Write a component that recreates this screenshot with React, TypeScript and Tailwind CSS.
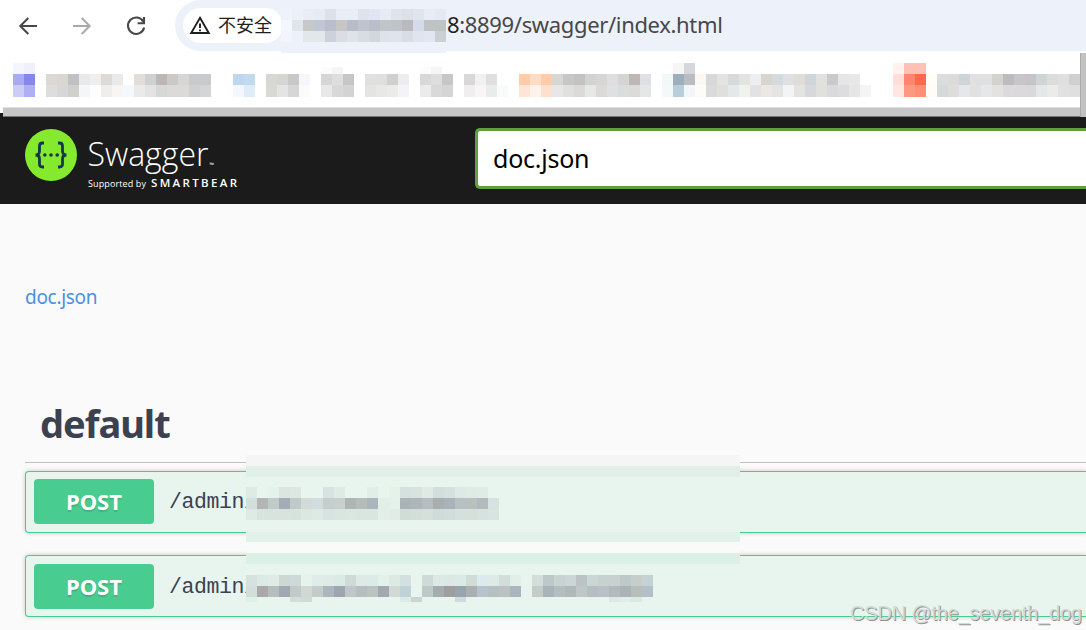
import { clsx } from "clsx";

type Row = { h: number; runs: Record<number, string> };

// Every row is a set of runs: start column -> hex colours, 11px per cell
const bookmarkRows: Row[] = [
    { h: 4, runs: { 0: "f5f5ff f0effd", 60: "f6f6f6 d6d7da", 80: "fff1ee ffc0b5 ffc0b5" } },
    { h: 7, runs: { 0: "f5f5ff f0effd", 28: "fcfcfc f5f5f5", 37: "fcfcfc f5f5f5", 60: "f6f6f6 d6d7da", 80: "fff1ee ffc0b5 ffc0b5" } },
    {
        h: 11,
        runs: {
            0: "aaaaf0 8586ea fdfdfd dad9d6 dad6d2 bfc1c2 e8eaea edeeed dcd9d7 e8eaeb",
            11: "e0dddb cfd0d2 bcb6b4 c9c9c7 d7d6d5 c9cacc c9cacc",
            20: "bfd7ee c1daee",
            23: "d8d7d4 d5d5d3 c9c8c6 f4f8fc",
            28: "d6d6d6 dedede c6c6c6",
            32: "e1e0e1 dfdfdd d0d0d0 ededf0",
            37: "d8d8d8 dedede c7c7c7",
            41: "d9d7d8 eff1f3 dfdfdf",
            46: "ffcca9 ffdcc4 ffccaa d9d7d3 c7c7c7 c4c3c1 d3d3d3 d7d6d5 dddedd d4d4d5 bdb8b6 dfe0e3",
            59: "f2f7f8 9dafba b9bdc1 fcf7f3 d8d8d8 e3e3e3 d7d9db e3e3e0 edeef1 d8d5cf d5dade e0e0e2 e2dcd9 d0d5dc e0e1e1 cacaca e6e6e7 e8e8e8",
            80: "ffded9 ff866b fe6947 fffdf8 dcdcdc dddada cfd4d7 e0e0e0 dfe0e0 d4d3cf babcbe c8c6c8 c7c3c6 cfd5d4 dcdcdb dfdfdf d0d0d0",
        },
    },
    {
        h: 12,
        runs: {
            0: "ccccf5 afaff4",
            3: "dddddb d7d7d7 d0d0ce f4f6f8",
            8: "efeeed f8f6f4 f4f9fd ebe9e9 e3e3e3 d5d8d7 dbdad8 dcdad9 cfd0d2 d3d5d7",
            20: "f4f8fe dfecf8",
            23: "d8d8d5 e4e4e5 d6d6d6 fbfbfb",
            28: "e8e8e8 d8d8d8 d3d3d3",
            32: "e5e4e2 e8e8e8 ebebe9 f4f4f8",
            37: "ebebeb d9d9d9 d5d5d5",
            41: "efefef f8f5f2 eaebeb f9fbfb",
            46: "ffe5d6 fff2ea ffe0cc e7e7e7 dfe0e0 dcdad8 e6e8e8 dbdad9 dee1e1 dadddc dbdbd9 e5e6e6",
            59: "f4f8f9 b9cedb f3f6f7 fdfcfa dadada dfdfdc e3e8eb f1f1ee e2e2e2 e9e8e4 e5e4e2 f2f4f6 e4e3e1 d7d8dc e0e0dd d8dadd dddddd e6e6e6 f4f4f4",
            80: "ffe6e1 ff9880 ff8f77 fffbf5 d4d9dc dddddb e5e7eb e1e1e1 e6e7ea e3e2e1 dbdbdd dbd9da d9d8da e6e8e8 ebebea e1e1e1 dfdfdf",
        },
    },
];

const hostRows: Row[] = [
    { h: 11, runs: { 0: "eef3fb ebf0fa eaedf5 e7ebf4 dde1ea e8edf8 e8edf7 dfe3ec dfe6f1 e7ebf4 dfe3ec dce1e8 dee5ef e7ecf6 e4e9f4" } },
    { h: 11, runs: { 0: "f4f7fe e0e4ed c6c9c9 bfc8d2 babdcb c8c6c5 b5bdc7 bfc5d0 babeca c1c5c8 c0c4c8 b8babe d5dbe9 bfc3c4 bfc3c4" } },
    { h: 11, runs: { 0: "f2f5fd edf1fa e2e7ea e3e7e9 cdd1d9 dadde5 dfe2e6 d8dce4 d3d7dd dee2ea dfe3ed dadde6 dfe5ef e1e6f0 cbced3" } },
    { h: 11, runs: {} },
];

const firstPathRows: Row[] = [
    { h: 11, runs: { 0: "deeae6", 2: "e3f3ec dbe6e3 dce7e3", 7: "d7e3e1 ddebe6", 11: "e0eeea", 13: "e4f2ea d5e1de d8e2df dfeae6 d2dedc d6e1de dce9e6 dfeae6 dfece6" } },
    { h: 11, runs: { 0: "d3dfdb b2b5b4 c0cac7 a6acb5 c0cac8 d3dad7 d1dcdd c3cecd c8cfcd aeb5b5 b4bdb9 a9b7bd e1efe8 e3f1ea aab3b7 afb6ba b6bdc0 a9aeae a8b3ba b7c1c1 b9c1bf b3babc d5e2df" } },
    { h: 11, runs: { 0: "dfeae6 d7e3df d8e3df d8e2de d6e2de dce7e2 dce9e5 d7e3e1 d8e5e1 dbe6e1 d9e5e1 d9e5e1 e1efe8 e2ece6 d0dcd8 d3dedb d5dfdc cfdbd8 d2dddb d4e0dc d5e0dc d7e2de d7e4e1" } },
];

const secondPathRows: Row[] = [
    { h: 11, runs: { 0: "d6e2de dde9e4 e0ebe5 cdd8d5 ccd9d6 e4f3ec dfece7 dfebe7 dceae6 cfdad7 ddeae6 dcebe7 e3f1eb dde9e3 d2e0e0", 16: "cddad8 dde9e4 dbe8e5 dceae6 d2dcd6 dbebed dcebe5 d2dedb e1efe9", 26: "d3dedb bcc8ca c9d4d2 cbd7d6 bbc4c3 cad6d4 c7d2cf c7d2d0 bfc8c8 c6cdcb c5d2d4" } },
    { h: 11, runs: { 0: "d2dedb a9a9a9 b4bfbd a2a8b2 bfcac9 d1d7d3 c3cccb acb6bf 9fa6ad bec8c8 b8bebd bbc3c1 a2a8b0 d2d8d3 c0d1d7", 16: "bdc9c7 a5abae 9f9e9c 99a5ac aab0b1 b5c3cd b5c0c2 bcc2c1 aab5bf", 26: "c4ccca a9b4ba b3bebf b1b8ba bfc7c7 b7bec3 b9c1c5 b3babc aab3b7 b7bebc b3bfc9" } },
    { h: 5, runs: { 0: "e0efe9", 4: "d1ddda d0dbd8", 14: "dceae6 c8d5d4", 19: "cfdcdb", 33: "dbe9e5 e0eeea dbe9e5" } },
];

function Mosaic({ rows, className }: { rows: Row[]; className?: string }) {
    return (
        <div className={className}>
            {rows.map((row, r) => (
                <div key={r} className="grid auto-cols-[11px] grid-flow-col justify-start" style={{ height: row.h }}>
                    {Object.entries(row.runs).flatMap(([start, colors]) =>
                        colors.split(" ").map((color, i) => (
                            <span
                                key={`${start}-${i}`}
                                className="row-start-1"
                                style={{ gridColumnStart: Number(start) + i + 1, backgroundColor: `#${color}` }}
                            />
                        ))
                    )}
                </div>
            ))}
        </div>
    );
}

function Toolbar() {
    return (
        <div className="flex h-[51px] items-center bg-white">
            <svg className="ml-4 h-6 w-6 shrink-0" viewBox="0 0 24 24" fill="none" stroke="#474747" strokeWidth="2">
                <path d="M21 12H4.5M12.3 4 4.3 12l8 8" />
            </svg>
            <svg className="ml-[30px] h-6 w-6 shrink-0" viewBox="0 0 24 24" fill="none" stroke="#a9a9a9" strokeWidth="2">
                <path d="M3 12h16.5M11.7 4l8 8-8 8" />
            </svg>
            <svg className="ml-[30px] h-6 w-6 shrink-0" viewBox="0 0 24 24" fill="none" stroke="#474747" strokeWidth="2.1">
                <path d="M19.3 7.6A8.2 8.2 0 1 0 20.2 13.5M20 3v6.2h-6.4" />
            </svg>
            <div className="relative ml-[27px] flex h-[51px] flex-1 items-center rounded-l-full bg-[#edf1fa]">
                <div className="ml-2 flex h-[35px] w-[100px] items-center rounded-full bg-white pl-[6px]">
                    <svg className="h-[22px] w-[22px]" viewBox="0 0 22 22" fill="none" stroke="#1f1f1f" strokeWidth="1.9">
                        <path d="M11 2.8 19.8 18H2.2z" />
                        <path d="M11 8.5v4.5M11 14.4v1.8" />
                    </svg>
                    <span className="ml-[7px] pb-[3px] font-['Noto_Sans_CJK_SC',sans-serif] text-[18px] leading-none whitespace-nowrap text-[#1f1f1f]">不安全</span>
                </div>
                <Mosaic rows={hostRows} className="absolute top-[9px] left-[106px] w-[165px] bg-[#edf1fa]" />
                <span className="ml-[164px] pb-[3px] font-['Noto_Sans',sans-serif] text-[22px] leading-none tracking-[-0.34px] whitespace-nowrap text-[#474747]">
                    <span className="text-[#1f1f1f]">8</span>:8899/swagger/index.html
                </span>
            </div>
        </div>
    );
}

function SwaggerLogo() {
    return (
        <svg className="ml-6 h-[64px] w-[216px] shrink-0" viewBox="24 128 216 64">
            <circle cx="51" cy="155" r="26" fill="#85ea2d" />
            <g fill="none" stroke="#173647" strokeWidth="2.8">
                <path d="M44 143h-1.5q-3 0-3 3v5q0 4-4 4 4 0 4 4v5q0 3 3 3H44" />
                <path d="M58 143h1.5q3 0 3 3v5q0 4 4 4-4 0-4 4v5q0 3-3 3H58" />
            </g>
            <g fill="#173647">
                <circle cx="44.8" cy="155" r="1.8" />
                <circle cx="51" cy="155" r="1.8" />
                <circle cx="57.2" cy="155" r="1.8" />
            </g>
            <g fill="#fff" fontFamily="Open Sans, sans-serif">
                <text x="87.5" y="165.5" fontSize="33" fontWeight="300" textLength="121" lengthAdjust="spacingAndGlyphs">Swagger</text>
                <text x="209.5" y="167" fontSize="6">™</text>
                <text x="88" y="186.5" fontSize="9" textLength="58">Supported by</text>
                <text x="151" y="186.5" fontSize="11.5" fontWeight="600" textLength="86">SMARTBEAR</text>
            </g>
        </svg>
    );
}

function Operation({ className }: { className?: string }) {
    return (
        <div className={clsx("flex h-[62px] rounded-l border border-r-0 border-[#49cc90] bg-[#e7f5ee] pl-2 shadow-[0_0_4px_rgba(0,0,0,0.22)]", className)}>
            <span className="flex h-[45px] w-[120px] items-center justify-center rounded bg-[#49cc90] font-['Noto_Sans',sans-serif] text-[22px] font-bold text-white [text-shadow:0_2px_1px_rgba(0,0,0,0.12)]">
                POST
            </span>
            <span className="ml-[15px] font-['Liberation_Mono',monospace] text-[21.5px] leading-[47px] tracking-[-0.4px] text-[#3b4151]">/admin/</span>
        </div>
    );
}

export default function App() {
    return (
        <div className="relative h-[630px] w-full overflow-hidden bg-[#fafafa]">
            <Toolbar />
            <div className="h-[56px] overflow-hidden bg-white pt-3 pl-[13px]">
                <Mosaic rows={bookmarkRows} />
            </div>

            {/* Frame edge between the browser chrome and the page */}
            <div className="h-[10px] bg-linear-to-b from-white from-60% to-[#1b1b1b] to-60% pl-[3px]">
                <div className="h-full border-t border-b border-t-[#e0e0e0] border-b-[#777777] bg-[#c6c6c6]" />
            </div>
            <div className="absolute top-[53px] right-0 h-[64px] w-[6px] border-l border-[#aaaaaa] bg-[#c2c2c2]" />

            <header className="flex h-[87px] items-start bg-[#1b1b1b] pt-[11px]">
                <SwaggerLogo />
                <div className="ml-[235px] flex h-[61px] flex-1 items-center rounded-l-[5px] border-[3px] border-r-0 border-[#62a03f] bg-white pl-[15px] font-['Noto_Sans',sans-serif] text-[25px] tracking-[-0.25px] text-black">
                    doc.json
                </div>
            </header>

            <main className="pl-[25px]">
                <a className="block pt-[80px] font-['Noto_Sans',sans-serif] text-[19px] leading-[26px] tracking-[-0.3px] text-[#4990e2]">doc.json</a>
                <h3 className="mt-[76px] h-[77px] border-b border-[#bfc0c5] pl-[15px] font-['Noto_Sans',sans-serif] text-[38px] leading-[75px] font-bold tracking-[-1px] text-[#3b4151]">
                    default
                </h3>
                <Operation className="mt-2 pt-[7px]" />
                <Operation className="mt-[22px] pt-2" />
            </main>

            {/* Masked part of the two paths */}
            <div className="absolute top-[455px] left-[246px] w-[494px] overflow-hidden bg-[#e7f5ee]">
                <div className="h-[11px] bg-[#f5f5f5]" />
                <div className="h-[11px] bg-[#e0f0e9]" />
                <Mosaic rows={firstPathRows} className="pt-[10px] pb-3" />
                <div className="h-[10px] bg-[#e2f1ea]" />
                <div className="h-[11px] bg-[#fafafa]" />
                <div className="h-[11px] bg-[#dbf0e7]" />
                <Mosaic rows={secondPathRows} className="pt-[11px]" />
            </div>

            <span className="absolute top-[601px] left-[850px] font-['Liberation_Sans',sans-serif] text-[20px] leading-6 tracking-[-0.2px] whitespace-nowrap text-[#d4dad7] [text-shadow:1px_1px_0_#8f9492]">
                CSDN @the_seventh_dog
            </span>
        </div>
    );
}
